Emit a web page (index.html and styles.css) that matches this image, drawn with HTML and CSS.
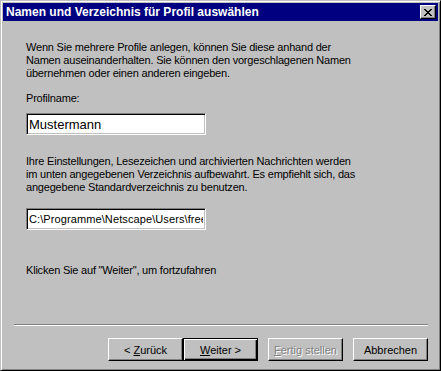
FILE: index.html
```html
<!DOCTYPE html>
<html lang="de">
<head>
    <meta charset="UTF-8">
    <title>Namen und Verzeichnis für Profil auswählen</title>
    <link rel="stylesheet" href="styles.css">
</head>
<body>
    <div class="window">
        <div class="titlebar">
            <span class="title">Namen und Verzeichnis für Profil auswählen</span>
            <button class="close" aria-label="Schließen">
                <svg width="8" height="7" viewBox="0 0 8 7">
                    <path d="M0 0h2v1h1v1h2v-1h1v-1h2v1h-1v1h-1v1h-1v1h1v1h1v1h1v1h-2v-1h-1v-1h-2v1h-1v1h-2v-1h1v-1h1v-1h1v-1h-1v-1h-1v-1h-1z" fill="#000"/>
                </svg>
            </button>
        </div>
        <div class="content">
            <p class="text">Wenn Sie mehrere Profile anlegen, können Sie diese anhand der<br>Namen auseinanderhalten. Sie können den vorgeschlagenen Namen<br>übernehmen oder einen anderen eingeben.</p>
            <label class="label" for="profilname">Profilname:</label>
            <input class="field field-name" id="profilname" type="text" value="Mustermann">
            <p class="text text-dir">Ihre Einstellungen, Lesezeichen und archivierten Nachrichten werden<br>im unten angegebenen Verzeichnis aufbewahrt. Es empfiehlt sich, das<br>angegebene Standardverzeichnis zu benutzen.</p>
            <input class="field field-path" type="text" value="C:\Programme\Netscape\Users\freeman">
            <p class="text text-next">Klicken Sie auf "Weiter", um fortzufahren</p>
        </div>
        <div class="separator"></div>
        <div class="buttons">
            <div class="nav">
                <button class="btn">&lt; <u>Z</u>urück</button>
                <button class="btn btn-default"><u>W</u>eiter &gt;</button>
            </div>
            <button class="btn" disabled><u>F</u>ertig stellen</button>
            <button class="btn">Abbrechen</button>
        </div>
    </div>
</body>
</html>
```

FILE: styles.css
```css
body {
    margin: 0;
    padding: 0;
    background-color: #c0c0c0;
    font-family: "Liberation Sans", Arial, sans-serif;
    font-size: 11px;
}
.window {
    width: 441px;
    height: 371px;
    box-sizing: border-box;
    background-color: #c0c0c0;
    border: 1px solid;
    border-color: #c0c0c0 #000 #000 #c0c0c0;
    box-shadow: inset 1px 1px #fff, inset -1px -1px #808080;
    padding: 2px;
    display: flex;
    flex-direction: column;
}
.titlebar {
    height: 18px;
    background-color: #000080;
    color: #fff;
    display: flex;
    align-items: center;
    justify-content: space-between;
    padding: 0 2px 0 3px;
}
.title {
    font-weight: bold;
    font-size: 12px;
}
.close {
    width: 16px;
    height: 14px;
    padding: 0;
    margin: 0;
    border: 1px solid;
    border-color: #fff #000 #000 #fff;
    box-shadow: inset -1px -1px #808080;
    background-color: #c0c0c0;
    display: flex;
    align-items: center;
    justify-content: center;
}
.content {
    padding: 20px 0 0 23px;
    display: flex;
    flex-direction: column;
    align-items: flex-start;
    height: 258px;
    box-sizing: border-box;
}
.text {
    margin: 0;
    line-height: 13px;
    letter-spacing: -0.2px;
    color: #000;
}
.label {
    margin-top: 12px;
    line-height: 13px;
    letter-spacing: -0.2px;
}
.field {
    width: 180px;
    height: 22px;
    box-sizing: border-box;
    margin: 0;
    padding: 0 2px;
    background-color: #fff;
    border: 1px solid;
    border-color: #808080 #fff #fff #808080;
    box-shadow: inset 1px 1px #000, inset -1px -1px #c0c0c0;
    font-family: "Liberation Sans", Arial, sans-serif;
    color: #000;
    outline: none;
}
.field-name {
    margin-top: 8px;
    font-size: 13px;
}
.field-path {
    margin-top: 14px;
    font-size: 11px;
    letter-spacing: 0.1px;
}
.text-dir {
    margin-top: 20px;
}
.text-next {
    margin-top: 34px;
}
.separator {
    margin: 45px 10px 0 11px;
    border-top: 1px solid #808080;
    border-bottom: 1px solid #fff;
    height: 0;
}
.buttons {
    display: flex;
    justify-content: flex-end;
    gap: 10px;
    margin-top: 12px;
    padding-right: 10px;
}
.nav {
    display: flex;
}
.btn {
    width: 75px;
    height: 23px;
    margin: 0;
    padding: 0;
    background-color: #c0c0c0;
    border: 1px solid;
    border-color: #fff #000 #000 #fff;
    box-shadow: inset -1px -1px #808080;
    font-family: "Liberation Sans", Arial, sans-serif;
    font-size: 11px;
    color: #000;
}
.btn-default {
    border: 1px solid #000;
    box-shadow: inset 1px 1px #fff, inset -1px -1px #000, inset -2px -2px #808080;
}
.btn:disabled {
    color: #808080;
    text-shadow: 1px 1px #fff;
}
```
